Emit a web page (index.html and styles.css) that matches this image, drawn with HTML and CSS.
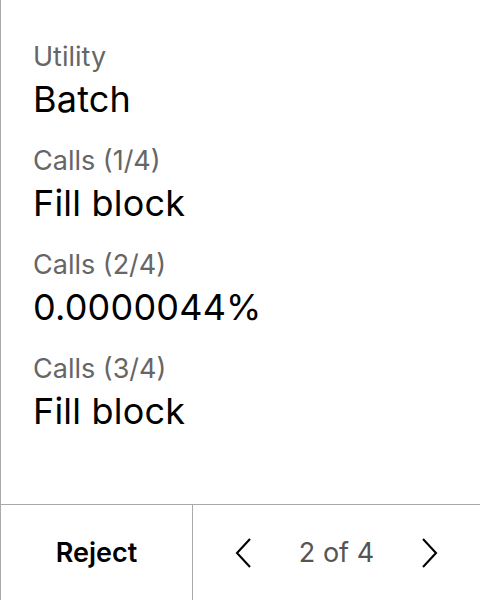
FILE: index.html
```html
<!DOCTYPE html>
<html>
<head>
<meta charset="utf-8">
<link rel="stylesheet" href="styles.css">
</head>
<body>
<div class="panel">
  <div class="content">
    <div class="field">
      <div class="label">Utility</div>
      <div class="value">Batch</div>
    </div>
    <div class="field">
      <div class="label">Calls (1/4)</div>
      <div class="value">Fill block</div>
    </div>
    <div class="field">
      <div class="label">Calls (2/4)</div>
      <div class="value">0.0000044%</div>
    </div>
    <div class="field">
      <div class="label">Calls (3/4)</div>
      <div class="value">Fill block</div>
    </div>
  </div>
  <div class="footer">
    <div class="reject">Reject</div>
    <div class="pager">
      <svg class="chev" width="16" height="30" viewBox="0 0 16 30"><path d="M15 1 L2 15 L15 29" fill="none" stroke="#000" stroke-width="2.1"/></svg>
      <span class="count">2 of 4</span>
      <svg class="chev" width="16" height="30" viewBox="0 0 16 30"><path d="M1 1 L14 15 L1 29" fill="none" stroke="#000" stroke-width="2.1"/></svg>
    </div>
  </div>
</div>
</body>
</html>
```

FILE: styles.css
```css
html, body {
  margin: 0;
  padding: 0;
  background: #fff;
}
body {
  font-family: Inter, "Noto Sans", sans-serif;
  color: #000;
}
.panel {
  height: 600px;
  border-left: 1px solid #aaa;
  box-sizing: border-box;
  display: flex;
  flex-direction: column;
}
.content {
  flex: 1;
  padding: 39px 0 0 32px;
  display: flex;
  flex-direction: column;
  gap: 20px;
}
.field {
  display: flex;
  flex-direction: column;
}
.label {
  font-size: 27px;
  line-height: 36px;
  color: #666;
}
.value {
  font-size: 36px;
  line-height: 48px;
  letter-spacing: 0.2px;
  color: #000;
}
.footer {
  height: 96px;
  border-top: 1px solid #aaa;
  box-sizing: border-box;
  display: flex;
}
.reject {
  width: 191px;
  display: flex;
  align-items: center;
  justify-content: center;
  font-size: 27px;
  font-weight: 600;
}
.pager {
  flex: 1;
  border-left: 1px solid #aaa;
  display: flex;
  align-items: center;
  justify-content: center;
  gap: 48px;
}
.count {
  font-size: 27px;
  color: #555;
}
```
